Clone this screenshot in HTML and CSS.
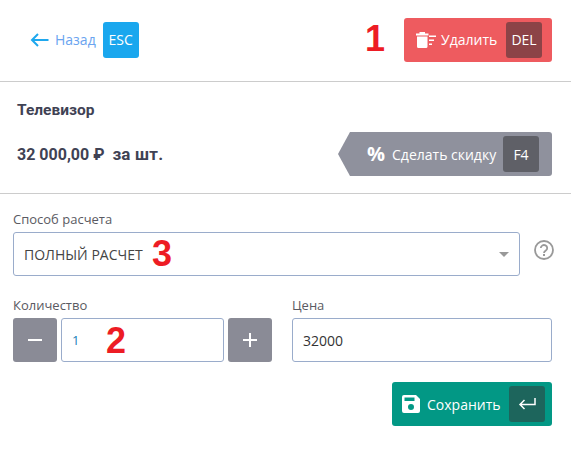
FILE: index.html
```html
<!DOCTYPE html>
<html lang="ru">
<head>
    <meta charset="UTF-8">
    <meta name="viewport" content="width=device-width, initial-scale=1.0">
    <title>Телевизор</title>
    <link rel="stylesheet" href="styles.css">
</head>
<body>
    <div class="page">
        <div class="top-bar">
            <a class="back-link">
                <svg class="back-icon" width="19" height="14" viewBox="0 0 19 14"><path d="M18.500 7H2M8 1L2 7l6 6" fill="none" stroke="#1fa8ee" stroke-width="2"/></svg>
                <span>Назад</span>
            </a>
            <span class="key key-esc">ESC</span>
            <button class="btn btn-delete">
                <svg width="20" height="16" viewBox="0 0 20 16"><path d="M0 1.500h12.500v2H0zM3.500 0h5.500v2H3.500zM1 4.500h10.500v10a1.500 1.500 0 0 1-1.500 1.500H2.500A1.500 1.500 0 0 1 1 14.500zM13 3.500h7v1.600h-7zM13 7.500h5v1.600h-5zM13 11.500h3v1.600h-3z" fill="#fff"/></svg>
                <span class="btn-text">Удалить</span>
                <span class="key key-del">DEL</span>
            </button>
            <span class="mark mark-one">1</span>
        </div>

        <div class="product">
            <h2 class="product-title">Телевизор</h2>
            <div class="product-row">
                <div class="product-price">32 000,00 ₽ &nbsp;<span class="price-unit">за шт.</span></div>
                <button class="btn btn-discount">
                    <span class="percent">%</span>
                    <span class="btn-text">Сделать скидку</span>
                    <span class="key key-f4">F4</span>
                </button>
            </div>
        </div>

        <div class="form">
            <label class="field-label">Способ расчета</label>
            <div class="select-row">
                <div class="select-box">
                    <span>ПОЛНЫЙ РАСЧЕТ</span>
                    <span class="select-arrow"></span>
                    <span class="mark mark-three">3</span>
                </div>
                <svg class="help-icon" width="20" height="20" viewBox="0 0 20 20">
                    <circle cx="10" cy="10" r="9" fill="none" stroke="#999" stroke-width="1.800"/>
                    <path d="M6.800 8a3.200 3 0 1 1 5 2.500c-1.200.8-1.800 1.300-1.800 2.500" fill="none" stroke="#999" stroke-width="1.800"/>
                    <rect x="9" y="14" width="2" height="2" fill="#999"/>
                </svg>
            </div>

            <div class="amount-row">
                <div class="amount-col">
                    <label class="field-label">Количество</label>
                    <div class="stepper">
                        <button class="step-btn"><span class="minus"></span></button>
                        <div class="stepper-input">
                            <input class="text-input count-input" type="text" value="1">
                            <span class="mark mark-two">2</span>
                        </div>
                        <button class="step-btn"><span class="plus"></span></button>
                    </div>
                </div>
                <div class="price-col">
                    <label class="field-label">Цена</label>
                    <input class="text-input price-input" type="text" value="32000">
                </div>
            </div>

            <div class="actions">
                <button class="btn btn-save">
                    <svg width="18" height="18" viewBox="0 0 18 18"><path fill-rule="evenodd" d="M2 0h12l4 4v12a2 2 0 0 1-2 2H2a2 2 0 0 1-2-2V2a2 2 0 0 1 2-2zM2.500 2.500v3.500h10V2.500zM9 9a3 3 0 1 0 0 6 3 3 0 0 0 0-6z" fill="#fff"/></svg>
                    <span class="btn-text">Сохранить</span>
                    <span class="key key-enter">
                        <svg width="18" height="12" viewBox="0 0 18 12"><path d="M17 0v6.500H2M6.500 2L2 6.500 6.500 11" fill="none" stroke="#fff" stroke-width="1.500"/></svg>
                    </span>
                </button>
            </div>
        </div>
    </div>
</body>
</html>
```

FILE: styles.css
```css
* {
    box-sizing: border-box;
}
body {
    margin: 0;
    background-color: #fff;
    font-family: "Open Sans", "Noto Sans", sans-serif;
    color: #3f4254;
}
.page {
    width: 571px;
}
.top-bar {
    position: relative;
    display: flex;
    align-items: center;
    height: 82px;
    padding: 0 19px 2px 30px;
    border-bottom: 1px solid #ccc;
}
.back-link {
    display: flex;
    align-items: center;
    gap: 6px;
    color: #6aa4f0;
    font-size: 14px;
}
.back-icon {
    flex: none;
}
.key {
    display: flex;
    align-items: center;
    justify-content: center;
    flex: none;
    width: 36px;
    height: 36px;
    margin-left: auto;
    border-radius: 3px;
    color: #fff;
    font-size: 14px;
}
.key-esc {
    margin-left: 7px;
    background-color: #1aa7ee;
}
.btn {
    display: flex;
    align-items: center;
    height: 44px;
    padding: 0 10px 0 12px;
    border: none;
    border-radius: 3px;
    color: #fff;
    font-family: inherit;
    font-size: 14px;
}
.btn-delete {
    width: 148px;
    margin-left: auto;
    background-color: #ee5b5f;
}
.btn-delete .btn-text {
    margin-left: 5px;
}
.key-del {
    background-color: #8c4347;
}
.mark {
    position: absolute;
    color: #ed1c24;
    font-family: "Liberation Sans", sans-serif;
    font-size: 36px;
    font-weight: bold;
    line-height: 36px;
}
.mark-one {
    left: 365px;
    top: 21px;
}
.mark-two {
    left: 45px;
    top: 5px;
}
.mark-three {
    left: 138px;
    top: 3px;
}
.product {
    height: 112px;
    padding: 0 19px 0 17px;
    border-bottom: 1px solid #ccc;
}
.product-title {
    margin: 0;
    padding-top: 19px;
    font-family: Roboto, sans-serif;
    font-size: 15.500px;
    font-weight: 700;
    line-height: 18px;
}
.product-row {
    display: flex;
    align-items: center;
    justify-content: space-between;
    margin-top: 13px;
}
.product-price {
    font-family: Roboto, sans-serif;
    font-size: 16px;
    font-weight: 700;
}
.price-unit {
    font-size: 17px;
    letter-spacing: 0.2px;
}
.btn-discount {
    position: relative;
    width: 202px;
    padding: 0 13px 0 17px;
    border-radius: 0 3px 3px 0;
    background-color: #8f919d;
}
.btn-discount::before {
    content: "";
    position: absolute;
    left: -12px;
    top: 0;
    border-top: 22px solid transparent;
    border-bottom: 22px solid transparent;
    border-right: 12px solid #8f919d;
}
.percent {
    font-size: 20px;
    font-weight: 700;
    line-height: 1;
}
.btn-discount .btn-text {
    margin-left: 7px;
}
.key-f4 {
    background-color: #5f6067;
}
.form {
    padding: 0 19px 0 13px;
}
.field-label {
    display: block;
    height: 18px;
    color: #5a5a62;
    font-size: 13px;
    line-height: 18px;
}
.form > .field-label {
    margin-top: 16px;
    margin-bottom: 4px;
}
.select-row {
    display: flex;
    align-items: center;
}
.select-box {
    position: relative;
    display: flex;
    align-items: center;
    justify-content: space-between;
    flex: none;
    width: 507px;
    height: 44px;
    padding: 0 10px;
    border: 1px solid #9aaccb;
    border-radius: 3px;
    color: #444;
    font-size: 14px;
}
.select-arrow {
    width: 0;
    height: 0;
    border-left: 5px solid transparent;
    border-right: 5px solid transparent;
    border-top: 5px solid #999;
}
.help-icon {
    flex: none;
    margin-left: 14px;
    margin-top: -8px;
}
.amount-row {
    display: flex;
    margin-top: 20px;
    gap: 20px;
}
.amount-col .field-label,
.price-col .field-label {
    margin-bottom: 4px;
}
.stepper {
    display: flex;
    gap: 4px;
}
.stepper-input {
    position: relative;
}
.step-btn {
    display: flex;
    align-items: center;
    justify-content: center;
    width: 44px;
    height: 44px;
    padding: 0;
    border: none;
    border-radius: 3px;
    background-color: #8a8b96;
}
.minus {
    width: 14px;
    height: 2px;
    background-color: #fff;
}
.plus {
    width: 14px;
    height: 14px;
    background: linear-gradient(#fff, #fff) center / 14px 2px no-repeat, linear-gradient(#fff, #fff) center / 2px 14px no-repeat;
}
.text-input {
    display: block;
    height: 44px;
    padding: 0 10px;
    border: 1px solid #9aaccb;
    border-radius: 3px;
    background-color: #fff;
    font-family: inherit;
    font-size: 14px;
    color: #333;
    outline: none;
}
.count-input {
    width: 163px;
    color: #1a7fb8;
    font-size: 13px;
}
.price-input {
    width: 260px;
}
.actions {
    display: flex;
    justify-content: flex-end;
    margin-top: 20px;
}
.btn-save {
    width: 160px;
    padding: 0 7px 0 10px;
    background-color: #029885;
}
.btn-save .btn-text {
    margin-left: 7px;
}
.key-enter {
    background-color: #1d655c;
}
```
